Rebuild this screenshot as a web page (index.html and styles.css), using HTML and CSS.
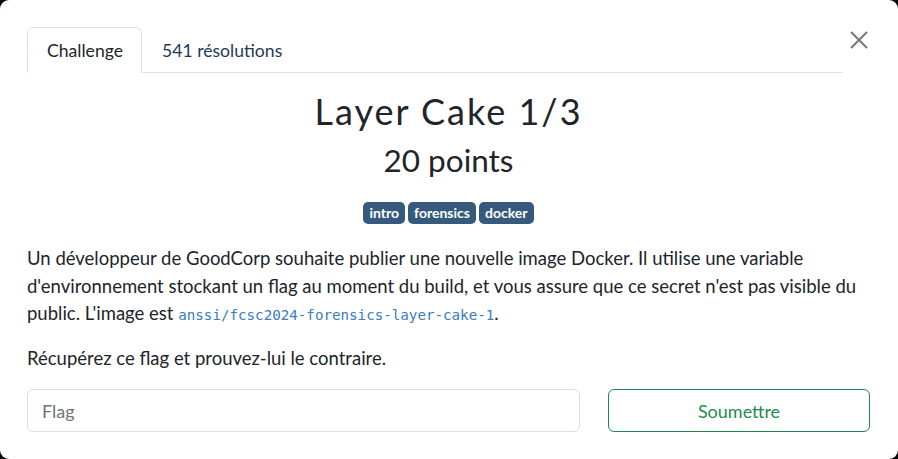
FILE: index.html
```html
<!DOCTYPE html>
<html lang="fr">
<head>
<meta charset="utf-8">
<link rel="stylesheet" href="styles.css">
</head>
<body>
<div class="modal">
  <div class="header">
    <nav class="tabs">
      <a class="tab active">Challenge</a>
      <a class="tab">541 résolutions</a>
    </nav>
    <button class="close" aria-label="Fermer">
      <svg width="20" height="20" viewBox="0 0 20 20"><path d="M2 2 L18 18 M18 2 L2 18" stroke="#777" stroke-width="2" fill="none"/></svg>
    </button>
  </div>
  <h2 class="name">Layer Cake 1/3</h2>
  <h3 class="value">20 points</h3>
  <div class="tags">
    <span class="badge">intro</span>
    <span class="badge">forensics</span>
    <span class="badge">docker</span>
  </div>
  <div class="desc">
    <p>Un développeur de GoodCorp souhaite publier une nouvelle image Docker. Il utilise une variable d'environnement stockant un flag au moment du build, et vous assure que ce secret n'est pas visible du public. L'image est <code>anssi/fcsc2024-forensics-layer-cake-1</code>.</p>
    <p>Récupérez ce flag et prouvez-lui le contraire.</p>
  </div>
  <form class="submit">
    <input class="flag" type="text" placeholder="Flag">
    <button class="btn" type="button">Soumettre</button>
  </form>
</div>
</body>
</html>
```
FILE: styles.css
```css
html, body { margin: 0; padding: 0; }
body {
  background: #0a0a0a;
  font-family: Lato, "Open Sans", sans-serif;
  color: #212529;
  width: 898px;
  height: 459px;
  overflow: hidden;
}
.modal {
  box-sizing: border-box;
  width: 898px;
  height: 459px;
  background: #fff;
  border-radius: 9px;
  padding: 27px 28px 0 27px;
}
.header {
  display: flex;
  align-items: flex-start;
}
.tabs {
  flex: 0 0 816px;
  display: flex;
  border-bottom: 1px solid #dee2e6;
  height: 45px;
}
.tab {
  box-sizing: border-box;
  height: 46px;
  padding: 0 18px 0 19px;
  display: flex;
  align-items: center;
  font-size: 17.6px;
  border: 1px solid transparent;
  border-radius: 6px 6px 0 0;
  color: #1f3a55;
  margin-bottom: -1px;
}
.active {
  color: #212529;
  border-color: #dee2e6 #dee2e6 #fff;
  background: #fff;
}
.close {
  background: none;
  border: 0;
  padding: 0;
  margin: 0 0 0 5px;
  width: 30px;
  height: 26px;
  display: flex;
  align-items: center;
  justify-content: center;
}
.name {
  margin: 17px 0 0;
  text-align: center;
  font-size: 36px;
  font-weight: 400;
  letter-spacing: 2px;
  line-height: 42px;
}
.value {
  margin: 10px 0 0;
  text-align: center;
  font-size: 31.5px;
  font-weight: 400;
  line-height: 36px;
}
.tags {
  display: flex;
  justify-content: center;
  gap: 3px;
  margin-top: 24px;
}
.badge {
  display: block;
  background: #355a7d;
  color: #fff;
  font-size: 14px;
  font-weight: 700;
  height: 22px;
  line-height: 22px;
  padding: 0 6px;
  border-radius: 5px;
}
.desc {
  margin-top: 21px;
  font-size: 18.5px;
  line-height: 27.5px;
  color: #212529;
}
.desc p { margin: 0 0 17px; }
code {
  font-family: "DejaVu Sans Mono", "Liberation Mono", monospace;
  font-size: 14.2px;
  line-height: 1;
  color: #3a7dc0;
}
.submit {
  display: flex;
  gap: 28px;
  margin-top: 12px;
}
.flag {
  box-sizing: border-box;
  width: 553px;
  height: 43px;
  border: 1px solid #dcdde0;
  border-radius: 6px;
  padding: 0 14px;
  font-family: Lato, sans-serif;
  font-size: 18px;
  color: #212529;
  outline: none;
}
.flag::placeholder { color: #6c757d; }
.btn {
  box-sizing: border-box;
  width: 262px;
  height: 43px;
  border: 1px solid #1e8a52;
  border-radius: 6px;
  background: #fff;
  color: #1e8a52;
  font-family: Lato, sans-serif;
  font-size: 18px;
}
```
